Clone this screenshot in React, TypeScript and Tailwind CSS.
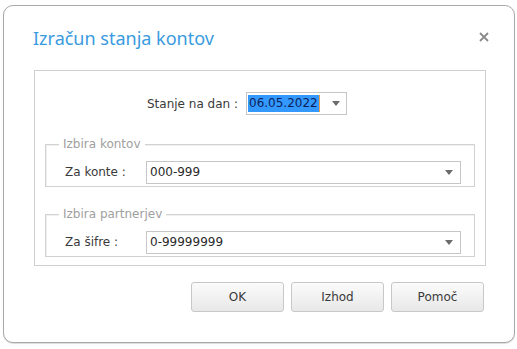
import React from "react";

const font = { fontFamily: '"DejaVu Sans", "Liberation Sans", sans-serif' };

function Arrow() {
  return (
    <svg width="8" height="5" viewBox="0 0 8 5" className="shrink-0">
      <path d="M0 0 L8 0 L4 5 Z" fill="#6b6b6b" />
    </svg>
  );
}

function Group({ legend, label, value }: { legend: string; label: string; value: string }) {
  return (
    <div className="relative mx-[10px] h-[43px] border border-[#d2d2d2] shadow-[inset_1px_1px_0_#f0f0f0] pt-[16px] pr-[13px] flex items-start">
      <span className="absolute left-[13px] top-[-8px] bg-white px-[4px] text-[12px] leading-[15px] text-[#a0a0a0]">
        {legend}
      </span>
      <span className="w-[100px] pl-[19px] text-[12px] leading-[23px] text-[#3a3a3a]">{label}</span>
      <div className="flex-1 h-[23px] border border-[#c6c6c6] flex items-center justify-between pl-[3px] pr-[7px]">
        <span className="text-[12px] text-[#2a2a2a] leading-[21px]">{value}</span>
        <Arrow />
      </div>
    </div>
  );
}

function Btn({ children }: { children: React.ReactNode }) {
  return (
    <div className="w-[93px] h-[30px] rounded-[3px] border border-[#c8c8c8] bg-gradient-to-b from-[#fbfbfb] to-[#e8e8e8] flex items-center justify-center text-[12px] text-[#3a3a3a]">
      {children}
    </div>
  );
}

export default function App() {
  return (
    <div className="w-[517px] h-[349px] bg-white pt-[5px] pl-[3px]" style={font}>
      <div className="w-[512px] h-[338px] rounded-[10px] border border-[#a9a9a9] shadow-[0_1px_1px_rgba(0,0,0,0.15)] bg-white pt-[20px] px-[29px] flex flex-col">
        <div className="h-[24px] flex items-center justify-between">
          <span
            className="text-[18px] leading-[24px] text-[#3a9be0]"
            style={{ fontFamily: '"Noto Sans", "Open Sans", sans-serif' }}
          >
            Izračun stanja kontov
          </span>
          <svg width="10" height="10" viewBox="0 0 10 10" className="mr-[-4px] mt-[-2px]">
            <path d="M1 1 L9 9 M9 1 L1 9" stroke="#8a8a8a" strokeWidth="1.8" />
          </svg>
        </div>
        <div className="mt-[20px] ml-[1px] w-[452px] h-[196px] border border-[#d0d0d0] pt-[21px] flex flex-col">
          <div className="flex items-center h-[23px]">
            <span className="w-[211px] text-right text-[12px] text-[#3a3a3a] pr-[8px]">Stanje na dan :</span>
            <div className="w-[101px] h-[23px] border border-[#c6c6c6] flex items-center justify-between pl-[1px] pr-[6px]">
              <span className="flex items-center">
                <span className="bg-[#3399ff] text-[#0b1f5c] text-[12px] leading-[17px] px-[1px]">06.05.2022</span>
                <span className="w-[1px] h-[17px] bg-[#f0a040]" />
              </span>
              <Arrow />
            </div>
          </div>
          <div className="mt-[29px]">
            <Group legend="Izbira kontov" label="Za konte :" value="000-999" />
          </div>
          <div className="mt-[27px]">
            <Group legend="Izbira partnerjev" label="Za šifre :" value="0-99999999" />
          </div>
        </div>
        <div className="mt-[16px] flex justify-end gap-[7px] pr-[1px]">
          <Btn>OK</Btn>
          <Btn>Izhod</Btn>
          <Btn>Pomoč</Btn>
        </div>
      </div>
    </div>
  );
}
